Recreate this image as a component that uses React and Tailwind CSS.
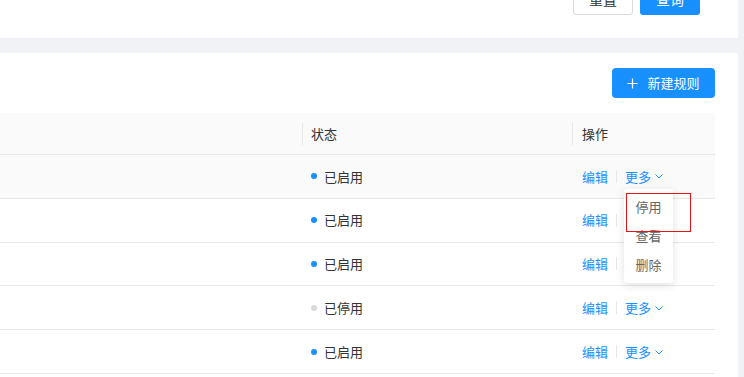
import React from 'react';

const rows = [
  { status: '已启用', on: true, hover: true },
  { status: '已启用', on: true },
  { status: '已启用', on: true },
  { status: '已停用', on: false },
  { status: '已启用', on: true },
];

function Chevron() {
  return (
    <svg width="8" height="5" viewBox="0 0 8 5" className="ml-[4px] mt-[1px]">
      <path d="M0.5 0.5 L4 4 L7.5 0.5" fill="none" stroke="#1890ff" strokeWidth="1" />
    </svg>
  );
}

export default function App() {
  return (
    <div
      className="relative w-[744px] h-[377px] overflow-hidden bg-[#f0f2f5] text-[13px] text-[#333]"
      style={{ fontFamily: '"Noto Sans CJK SC", "Noto Sans", sans-serif' }}
    >
      {/* search card (scrolled, only bottom visible) */}
      <div className="h-[38px] mr-[6px] bg-white flex justify-end items-end gap-[7px] pr-[38px] pb-[23px]">
        <button className="shrink-0 w-[60px] h-[32px] border border-[#d9d9d9] rounded-[3px] bg-white text-[#333] text-[14px]">
          重置
        </button>
        <button className="shrink-0 w-[60px] h-[32px] rounded-[3px] bg-[#1890ff] text-white text-[14px]">
          查询
        </button>
      </div>

      {/* list card */}
      <div className="mt-[15px] mr-[6px] bg-white pr-[23px] pt-[15px] h-[400px]">
        <div className="flex justify-end mb-[15px]">
          <button className="w-[103px] h-[30px] rounded-[4px] bg-[#1890ff] text-white flex items-center justify-center gap-[9px]">
            <svg width="11" height="11" viewBox="0 0 11 11">
              <path d="M5.5 0.5 V10.5 M0.5 5.5 H10.5" stroke="white" strokeWidth="1.2" />
            </svg>
            <span>新建规则</span>
          </button>
        </div>

        {/* table */}
        <div>
          <div className="h-[42px] bg-[#fafafa] border-b border-[#e8e8e8] flex items-center">
            <div className="w-[302px]" />
            <div className="w-[270px] flex items-center">
              <span className="w-px h-[22px] bg-[#e8e8e8]" />
              <span className="ml-[8px]">状态</span>
            </div>
            <div className="flex-1 flex items-center">
              <span className="w-px h-[22px] bg-[#e8e8e8]" />
              <span className="ml-[9px]">操作</span>
            </div>
          </div>
          {rows.map((r, i) => (
            <div
              key={i}
              className={`h-[43.8px] border-b border-[#e8e8e8] flex items-center ${r.hover ? 'bg-[#fafafa]' : 'bg-white'}`}
            >
              <div className="w-[302px]" />
              <div className="w-[270px] flex items-center pl-[9px]">
                <span className={`w-[6px] h-[6px] rounded-full ${r.on ? 'bg-[#1890ff]' : 'bg-[#d9d9d9]'}`} />
                <span className="ml-[7px]">{r.status}</span>
              </div>
              <div className="flex-1 flex items-center pl-[10px] text-[#1890ff]">
                <span>编辑</span>
                <span className="w-px h-[13px] bg-[#e8e8e8] mx-[8px]" />
                <span>更多</span>
                <Chevron />
              </div>
            </div>
          ))}
        </div>
      </div>

      {/* dropdown menu */}
      <div className="absolute left-[624px] top-[189px] w-[49px] h-[94px] pt-[3px] bg-white rounded-[3px] shadow-[0_2px_10px_rgba(0,0,0,0.12)] flex flex-col items-center text-[#666]">
        <div className="h-[29px] flex items-center">停用</div>
        <div className="h-[29px] flex items-center">查看</div>
        <div className="h-[29px] flex items-center">删除</div>
      </div>

      {/* highlight box */}
      <div className="absolute left-[626px] top-[193px] w-[65px] h-[39px] border border-[#e5141b]" />
    </div>
  );
}
